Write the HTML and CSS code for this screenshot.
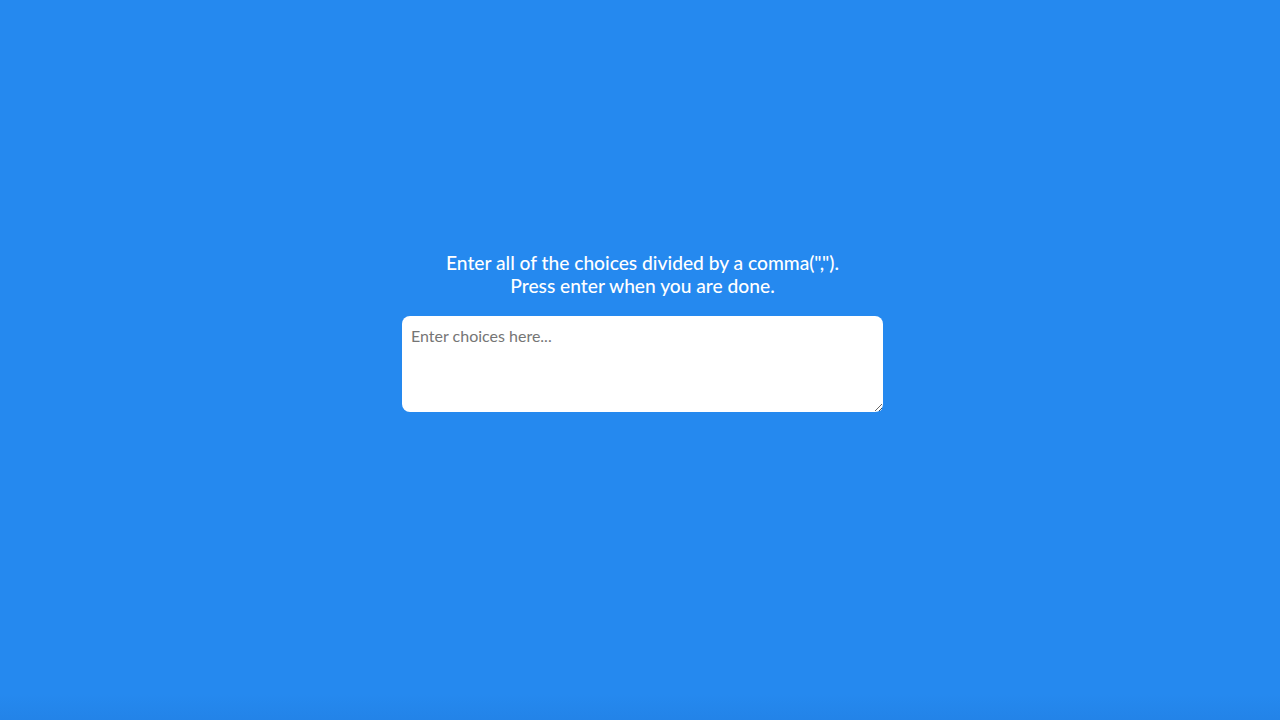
FILE: index.html
```html
<!DOCTYPE html>
<html lang="en">
<head>
<meta charset="utf-8">
<title>Choices</title>
<link rel="stylesheet" href="styles.css">
</head>
<body>
<main class="page">
  <section class="panel">
    <h3 class="prompt">Enter all of the choices divided by a comma(",").<br>Press enter when you are done.</h3>
    <textarea class="choices" placeholder="Enter choices here..."></textarea>
  </section>
  <div class="shade"></div>
</main>
</body>
</html>
```
FILE: styles.css
```css
html, body {
  margin: 0;
  padding: 0;
  height: 100%;
}
body {
  background: #2589ef;
  font-family: Lato, "Noto Sans", sans-serif;
  overflow: hidden;
}
.page {
  box-sizing: border-box;
  height: 720px;
  padding-left: 5px;
  display: flex;
  flex-direction: column;
  align-items: center;
  position: relative;
}
.panel {
  margin-top: 251px;
  display: flex;
  flex-direction: column;
  align-items: center;
}
.prompt {
  margin: 0 0 19px;
  color: #ffffff;
  font-size: 19.2px;
  font-weight: 500;
  line-height: 23px;
  text-align: center;
}
.choices {
  box-sizing: border-box;
  width: 481px;
  height: 96px;
  border: none;
  border-radius: 8px;
  padding: 10px 9px;
  font-family: Lato, "Noto Sans", sans-serif;
  font-size: 16px;
  color: #333;
  background: #fff;
  outline: none;
}
.choices::placeholder {
  color: #757575;
}
.shade {
  position: absolute;
  left: 0;
  right: 0;
  bottom: 0;
  height: 26px;
  background: linear-gradient(to bottom, rgba(20, 90, 180, 0), rgba(20, 90, 180, 0.12));
}
```
